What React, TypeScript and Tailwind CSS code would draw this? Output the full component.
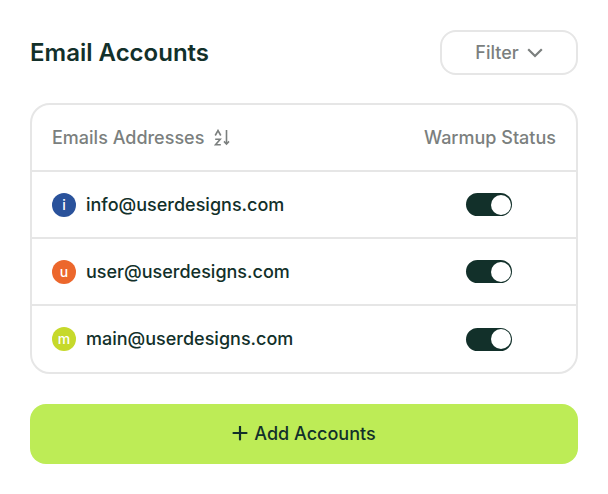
const accounts = [
  { email: "info@userdesigns.com", initial: "i", color: "bg-[#2a529b]" },
  { email: "user@userdesigns.com", initial: "u", color: "bg-[#ec672c]" },
  { email: "main@userdesigns.com", initial: "m", color: "bg-[#c6d92b]" },
];

const ChevronIcon = () => (
  <svg viewBox="0 0 16 10" className="w-4 h-2.5" fill="none" stroke="currentColor" strokeWidth="2.2" aria-hidden="true">
    <path d="M1.2 1.2 8 8l6.8-6.8" />
  </svg>
);

const SortIcon = () => (
  <svg viewBox="0 0 16 18" className="w-4 h-[18px]" fill="none" stroke="currentColor" strokeWidth="1.6" aria-hidden="true">
    <path d="M1.2 6.5 4 1.5l2.8 5" />
    <path d="M1.2 10.3h5L1.5 15.7h5.3" />
    <path d="M12.5 1v14" />
    <path d="m10 12.4 2.5 2.6 2.5-2.6" />
  </svg>
);

const PlusIcon = () => (
  <svg viewBox="0 0 16 16" className="w-4 h-4" fill="none" stroke="currentColor" strokeWidth="2.2" strokeLinecap="round" aria-hidden="true">
    <path d="M8 .5v13M1.5 7h13" />
  </svg>
);

const App = () => {
  return (
    <main className="bg-white p-[30px] font-['Inter',sans-serif] text-lg font-medium text-[#12302a]">
      {/* Header */}
      <header className="flex items-center justify-between">
        <h1 className="text-2xl font-semibold">Email Accounts</h1>
        <button
          type="button"
          className="flex h-[45px] w-[138px] items-center justify-center gap-2 rounded-2xl border-2 border-[#e6e6e6] text-[#7b7f7e]"
        >
          Filter
          <ChevronIcon />
        </button>
      </header>

      {/* Accounts */}
      <div className="mt-7 overflow-hidden rounded-[20px] border-2 border-[#e6e6e6]">
        <table className="w-full">
          <thead>
            <tr className="h-[66px] border-b-2 border-[#e6e6e6] text-[#7b7f7e]">
              <th scope="col" className="pl-5 text-left font-medium">
                <span className="flex items-center gap-2.5">
                  Emails Addresses
                  <SortIcon />
                </span>
              </th>
              <th scope="col" className="w-[174px] pr-5 text-right font-medium">
                Warmup Status
              </th>
            </tr>
          </thead>
          <tbody>
            {accounts.map((account) => (
              <tr key={account.email} className="h-[67px] border-b-2 border-[#e6e6e6] last:border-b-0">
                <td className="pl-5">
                  <div className="flex items-center gap-2.5">
                    <span
                      className={`flex size-6 items-center justify-center rounded-full text-sm leading-none text-white ${account.color}`}
                    >
                      {account.initial}
                    </span>
                    {account.email}
                  </div>
                </td>
                <td>
                  <input
                    type="checkbox"
                    role="switch"
                    defaultChecked
                    aria-label={`Warmup ${account.email}`}
                    className="mx-auto flex h-[23px] w-[46px] appearance-none items-center rounded-full bg-gray-300 px-px before:size-5 before:rounded-full before:bg-white checked:justify-end checked:bg-[#12302a]"
                  />
                </td>
              </tr>
            ))}
          </tbody>
        </table>
      </div>

      <button
        type="button"
        className="mt-[30px] flex h-[60px] w-full items-center justify-center gap-1.5 rounded-2xl bg-[#bdec56]"
      >
        <PlusIcon />
        Add Accounts
      </button>
    </main>
  );
};

export default App;
